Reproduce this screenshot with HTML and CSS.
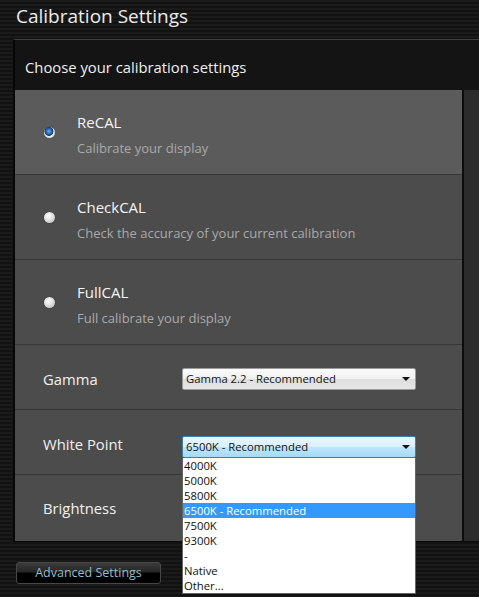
FILE: index.html
```html
<!DOCTYPE html>
<html>
	<head>
		<meta charset="UTF-8" />
		<title>Calibration Settings</title>
		<link rel="stylesheet" href="styles.css">
	</head>

	<body>
		<h1 class="pageTitle">Calibration Settings</h1>
		<div class="panel">
			<div class="panelHead">Choose your calibration settings</div>
			<div class="panelBody">
				<div class="list">
					<div class="option active">
						<span class="radio checked"></span>
						<div class="optionText">
							<span class="optionName">ReCAL</span>
							<span class="optionDesc">Calibrate your display</span>
						</div>
					</div>
					<div class="option">
						<span class="radio"></span>
						<div class="optionText">
							<span class="optionName">CheckCAL</span>
							<span class="optionDesc">Check the accuracy of your current calibration</span>
						</div>
					</div>
					<div class="option">
						<span class="radio"></span>
						<div class="optionText">
							<span class="optionName">FullCAL</span>
							<span class="optionDesc">Full calibrate your display</span>
						</div>
					</div>
					<div class="setting">
						<span class="settingName">Gamma</span>
						<div class="select">Gamma 2.2 - Recommended<span class="arrow"></span></div>
					</div>
					<div class="setting">
						<span class="settingName">White Point</span>
						<div class="selectWrap dropped">
							<div class="select open">6500K - Recommended<span class="arrow"></span></div>
							<ul class="dropList">
								<li>4000K</li>
								<li>5000K</li>
								<li>5800K</li>
								<li class="hover">6500K - Recommended</li>
								<li>7500K</li>
								<li>9300K</li>
								<li>-</li>
								<li>Native</li>
								<li>Other...</li>
							</ul>
						</div>
					</div>
					<div class="setting last">
						<span class="settingName">Brightness</span>
					</div>
				</div>
				<div class="track"></div>
			</div>
		</div>
		<div class="footer">
			<button class="advBtn">Advanced Settings</button>
		</div>
	</body>
</html>
```

FILE: styles.css
```css
body{
	margin: 0;
	height: 597px;
	overflow: hidden;
	font-family: "Open Sans", "Noto Sans", sans-serif;
	background: repeating-linear-gradient(to bottom, #1a1a1a 0, #1a1a1a 2px, #121212 2px, #121212 4px);
}
.pageTitle{
	margin: 0;
	height: 39px;
	padding: 0 0 0 16px;
	box-sizing: border-box;
	font-size: 19px;
	font-weight: normal;
	line-height: 32px;
	color: #ececec;
}
.panel{
	margin-left: 13px;
	border-top: 1px solid #3e3e3e;
	border-left: 2px solid #070707;
	background: #141414;
}
.panelHead{
	height: 50px;
	padding: 4px 0 0 10px;
	box-sizing: border-box;
	display: flex;
	align-items: center;
	font-size: 14.8px;
	color: #f0f0f0;
}
.panelBody{
	display: flex;
	flex-direction: row;
	height: 451px;
	border-bottom: 1px solid #0a0a0a;
}
.list{
	flex-grow: 1;
	display: flex;
	flex-direction: column;
	background: #4c4c4c;
}
.track{
	width: 15px;
	border-left: 2px solid #0c0c0c;
	background: #2c2c2c;
}
.option{
	height: 85px;
	box-sizing: border-box;
	border-bottom: 1px solid #363636;
	display: flex;
	flex-direction: row;
	align-items: center;
}
.option.active{
	background: #5b5b5b;
}
.radio{
	width: 11px;
	height: 11px;
	margin: 0 22px 0 29px;
	border-radius: 50%;
	background: radial-gradient(circle at 40% 35%, #ffffff 0, #e4e4e4 40%, #b4b4b4 100%);
	box-shadow: 0 0 1px #2a2a2a;
}
.radio.checked{
	background: radial-gradient(circle at 45% 40%, #74ade4 0, #2a6fb8 28%, #123c6e 46%, #ececec 54%, #c4c4c4 100%);
}
.optionText{
	display: flex;
	flex-direction: column;
	margin-top: 9px;
}
.optionName{
	font-size: 15px;
	line-height: 23px;
	color: #f4f4f4;
}
.optionDesc{
	font-size: 13px;
	line-height: 28px;
	color: #a9a9a9;
}
.setting{
	height: 65px;
	box-sizing: border-box;
	padding-top: 4px;
	border-bottom: 1px solid #363636;
	display: flex;
	flex-direction: row;
	align-items: center;
}
.setting.last{
	height: 66px;
	padding-top: 0;
	border-bottom: none;
}
.settingName{
	width: 139px;
	padding-left: 28px;
	font-size: 14.8px;
	color: #f0f0f0;
}
.selectWrap{
	position: relative;
}
.selectWrap.dropped{
	margin-top: 5px;
}
.select{
	position: relative;
	width: 234px;
	height: 22px;
	box-sizing: border-box;
	padding-left: 3px;
	border: 1px solid #9c9c9c;
	border-radius: 2px;
	background: linear-gradient(to bottom, #fbfbfb 0, #efefef 50%, #dedede 51%, #e6e6e6 100%);
	font-size: 11.3px;
	line-height: 20px;
	color: #111;
}
.select.open{
	border-color: #3c7fb1;
	background: linear-gradient(to bottom, #eaf6fd 0, #d9f0fc 50%, #bee6fd 51%, #a7d9f5 100%);
}
.arrow{
	position: absolute;
	right: 5px;
	top: 8px;
	border-left: 4px solid transparent;
	border-right: 4px solid transparent;
	border-top: 4px solid #111;
}
.dropList{
	position: absolute;
	left: 0;
	top: 22px;
	width: 234px;
	margin: 0;
	padding: 0;
	box-sizing: border-box;
	list-style: none;
	background: #fff;
	border: 1px solid #646464;
	border-top: none;
	font-size: 11.3px;
	line-height: 15px;
	color: #111;
	z-index: 2;
}
.dropList li{
	height: 15px;
	padding-left: 1px;
}
.dropList li.hover{
	background: #3399ff;
	color: #fff;
}
.footer{
	padding: 18px 0 0 16px;
}
.advBtn{
	width: 145px;
	height: 22px;
	padding: 0;
	border: 1px solid #474747;
	border-radius: 3px;
	background: linear-gradient(to bottom, #3c3c3c 0, #262626 45%, #000 50%, #000 100%);
	font-family: "Open Sans", "Noto Sans", sans-serif;
	font-size: 12.5px;
	color: #93bccb;
}
```
